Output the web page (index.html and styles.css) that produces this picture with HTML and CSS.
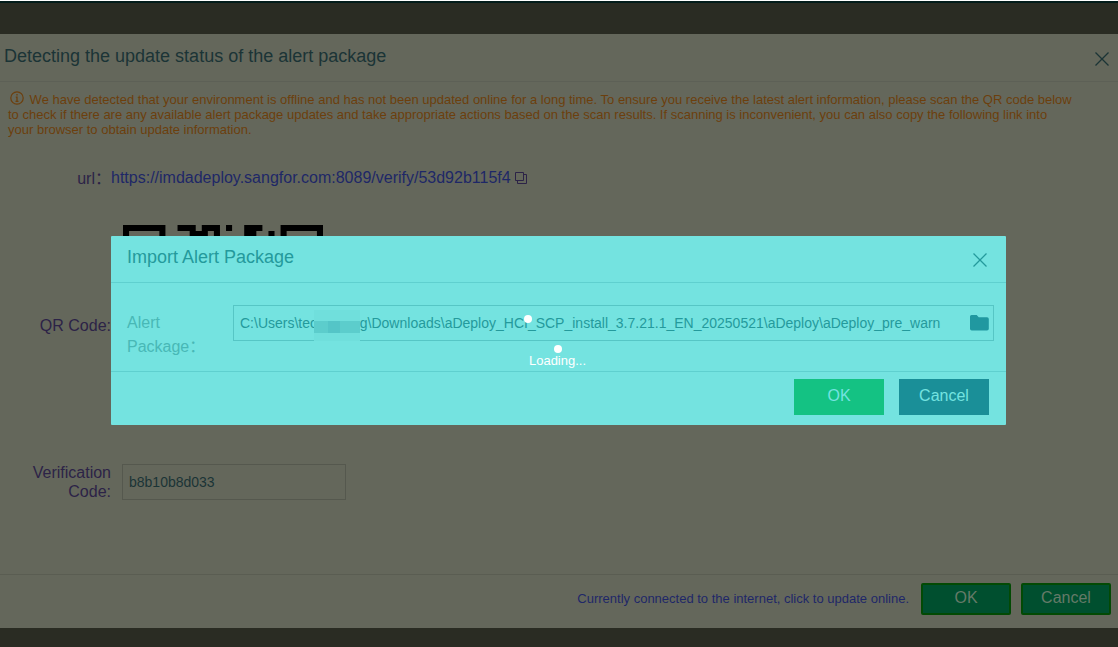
FILE: index.html
```html
<!DOCTYPE html>
<html lang="en">
<head>
<meta charset="utf-8">
<title>Import Alert Package</title>
<link rel="stylesheet" href="styles.css">
</head>
<body>
<main class="panel">
  <header class="panel-head">
    <h1 class="panel-title">Detecting the update status of the alert package</h1>
    <button class="close" type="button" aria-label="Close"><svg width="14" height="14" viewBox="0 0 14 14" fill="none" stroke="currentColor" stroke-width="1.3"><path d="M.5.5l13 13M13.5.5l-13 13"/></svg></button>
  </header>
  <div class="panel-body">
    <p class="notice"><svg class="notice-icon" width="14" height="14" viewBox="0 0 14 14" fill="none" stroke="currentColor"><circle cx="7" cy="7" r="6.2" stroke-width="1.2"/><path d="M7 3v1.6M5.8 6.200H7v4M5.500 10.300h3" stroke-width="1.3"/></svg> We have detected that your environment is offline and has not been updated online for a long time. To ensure you receive the latest alert information, please scan the QR code below<br>to check if there are any available alert package updates and take appropriate actions based on the scan results. If scanning is inconvenient, you can also copy the following link into<br>your browser to obtain update information.</p>
    <div class="details">
      <span class="label url-label">url：</span>
      <div class="url-value"><a class="link" href="#">https://imdadeploy.sangfor.com:8089/verify/53d92b115f4</a><button class="copy" type="button" aria-label="Copy link"><svg width="12" height="12" viewBox="0 0 12 12" fill="none" stroke="currentColor"><path d="M.5.5h8v8h-8zM2.5 8.5v3h9v-9h-3"/></svg></button></div>
      <span class="label">QR Code:</span>
      <svg class="qr" viewBox="0 0 33 33" role="img" aria-label="QR code"><path d="M0 0h7v7H0zM1 1v5h5V1zM26 0h7v7h-7zM27 1v5h5V1zM0 26h7v7H0zM1 27v5h5v-5z" fill-rule="evenodd"/><path d="M9 0h3v1h1V0h3v2h-1V1h-1v1h-3V1H9zM17 0h1v1h-1zM20 0h3v1h-1v1h-2zM24 1h1v1h-1z"/></svg>
      <label class="label code-label" for="code">Verification Code:</label>
      <input class="code" id="code" type="text" value="b8b10b8d033">
    </div>
  </div>
  <footer class="panel-foot">
    <a class="online" href="#">Currently connected to the internet, click to update online.</a>
    <button class="btn btn-dim" type="button">OK</button>
    <button class="btn btn-dim" type="button">Cancel</button>
  </footer>
</main>
<section class="modal" role="dialog" aria-labelledby="modal-title">
  <header class="modal-head">
    <h2 class="modal-title" id="modal-title">Import Alert Package</h2>
    <button class="close" type="button" aria-label="Close import"><svg width="14" height="14" viewBox="0 0 14 14" fill="none" stroke="currentColor" stroke-width="1.3"><path d="M.5.5l13 13M13.5.5l-13 13"/></svg></button>
  </header>
  <div class="modal-body">
    <label class="file-label" for="file">Alert Package：</label>
    <div class="file">
      <input class="path" id="file" type="text" value="C:\Users\tec           g\Downloads\aDeploy_HCI_SCP_install_3.7.21.1_EN_20250521\aDeploy\aDeploy_pre_warn">
      <button class="browse" type="button" aria-label="Browse"><svg width="19" height="16" viewBox="0 0 19 16" fill="currentColor"><path d="M1.5 0h5.2l2 2.3h8.3a1.8 1.8 0 0 1 1.8 1.8v9.6a1.8 1.8 0 0 1-1.8 1.8H1.8A1.8 1.8 0 0 1 0 13.700V1.500A1.500 1.500 0 0 1 1.500 0z"/></svg></button>
      <span class="mask"></span>
    </div>
  </div>
  <footer class="modal-foot">
    <button class="btn btn-ok" type="button">OK</button>
    <button class="btn btn-cancel" type="button">Cancel</button>
  </footer>
  <div class="loading" role="status">
    <svg width="38" height="38" viewBox="0 0 38 38" fill="#fff"><circle cx="4" cy="4" r="4"/><circle cx="34" cy="34" r="4"/></svg>
    <span>Loading...</span>
  </div>
</section>
</body>
</html>
```
FILE: styles.css
```css
* { box-sizing: border-box; }
body {
  margin: 0;
  min-height: 100vh;
  padding: 33px 0 19px;
  border-top: 1px solid #fff;
  background: #2a2c23;
  box-shadow: inset 0 2px #031d1b;
  display: flex;
  flex-direction: column;
  position: relative;
  font-family: "Liberation Sans", Arial, "Noto Sans CJK SC", sans-serif;
  font-size: 16px;
}
button, input { font: inherit; margin: 0; border-radius: 0; }
h1, h2, p { margin: 0; font-weight: 400; }
a { text-decoration: none; }
.panel {
  flex: 1;
  display: flex;
  flex-direction: column;
  background: #64675b;
  color: #1b3436;
}
.panel-head {
  display: flex;
  justify-content: space-between;
  align-items: center;
  height: 48px;
  padding: 0 9px 3px 4px;
  border-bottom: 1px solid #5d6056;
}
.panel-title { font-size: 18px; }
.close {
  display: flex;
  padding: 5px 0 0;
  border: 0;
  background: none;
  color: inherit;
}
.panel-body { flex: 1; }
.notice {
  padding: 9px 8px 0;
  font-size: 13px;
  line-height: 15px;
  color: #6c3f0d;
}
.notice-icon { margin: 0 2px; vertical-align: -1px; }
.details {
  display: grid;
  grid-template-columns: 111px 1fr;
  grid-template-rows: 38px 200px 58px;
  row-gap: 28px;
  align-items: center;
  padding-top: 22px;
}
.label { color: #2c2347; text-align: right; line-height: 19px; }
.link { color: #1e2767; }
.url-value { display: flex; align-items: center; gap: 4px; }
.copy { display: flex; padding: 0; border: 0; background: none; color: #2c2347; }
.qr { width: 200px; margin-left: 12px; }
.code {
  width: 224px;
  height: 36px;
  margin-left: 11px;
  padding: 0 6px;
  border: 1px solid #55584e;
  background: none;
  color: #1b3436;
  font-size: 14px;
}
.panel-foot {
  display: flex;
  align-items: center;
  justify-content: flex-end;
  gap: 10px;
  height: 54px;
  padding: 0 7px 6px;
  border-top: 1px solid #5a5d52;
}
.online { margin-right: 2px; font-size: 13px; color: #1f2768; }
.btn { width: 90px; border: 0; padding: 0 0 2px; }
.btn-dim {
  height: 32px;
  border: 2px solid #024a04;
  border-radius: 2px;
  background: #004f2f;
  color: #647a68;
}
.modal {
  position: absolute;
  top: 235px;
  left: 111px;
  right: 112px;
  border-radius: 1px;
  background: #74e3e0;
  color: #249a9c;
}
.modal-head {
  display: flex;
  justify-content: space-between;
  align-items: center;
  height: 47px;
  padding: 0 19px 4px 16px;
  border-bottom: 1px solid #5fd0cf;
}
.modal-title { font-size: 18px; }
.modal-body {
  display: flex;
  align-items: flex-start;
  height: 88px;
  padding: 22px 12px 0 16px;
}
.file-label {
  width: 106px;
  padding: 6px 30px 0 0;
  line-height: 24px;
  color: #48b8b6;
}
.file {
  position: relative;
  flex: 1;
  min-width: 0;
  display: flex;
  align-items: center;
  height: 36px;
  padding: 0 4px 0 6px;
  border: 1px solid #56c6c5;
}
.path {
  flex: 1;
  min-width: 0;
  padding: 0;
  border: 0;
  background: none;
  color: #249a9c;
  font-size: 14px;
  white-space: pre;
}
.browse { display: flex; padding: 0; margin-left: 11px; border: 0; background: none; color: #2098a0; }
.mask {
  position: absolute;
  left: 80px;
  top: 4px;
  width: 46px;
  height: 31px;
  background: linear-gradient(90deg, #5ccdcc 0 14px, #54c5c7 14px 26px, #5ccdcc 26px) 0 11px / 100% 12px no-repeat #70dfdc;
}
.modal-foot {
  display: flex;
  justify-content: flex-end;
  gap: 15px;
  height: 54px;
  padding: 7px 17px;
  border-top: 1px solid #5fd0cf;
}
.btn-ok, .btn-cancel { height: 36px; color: #74e3e0; }
.btn-ok { background: #14c283; }
.btn-cancel { background: #1a8f98; }
.loading {
  position: absolute;
  top: 79px;
  left: 50%;
  width: 68px;
  margin-left: -35px;
  display: flex;
  flex-direction: column;
  align-items: center;
  font-size: 13px;
  line-height: 16px;
  color: #fff;
}
.loading svg { align-self: flex-start; }
```
